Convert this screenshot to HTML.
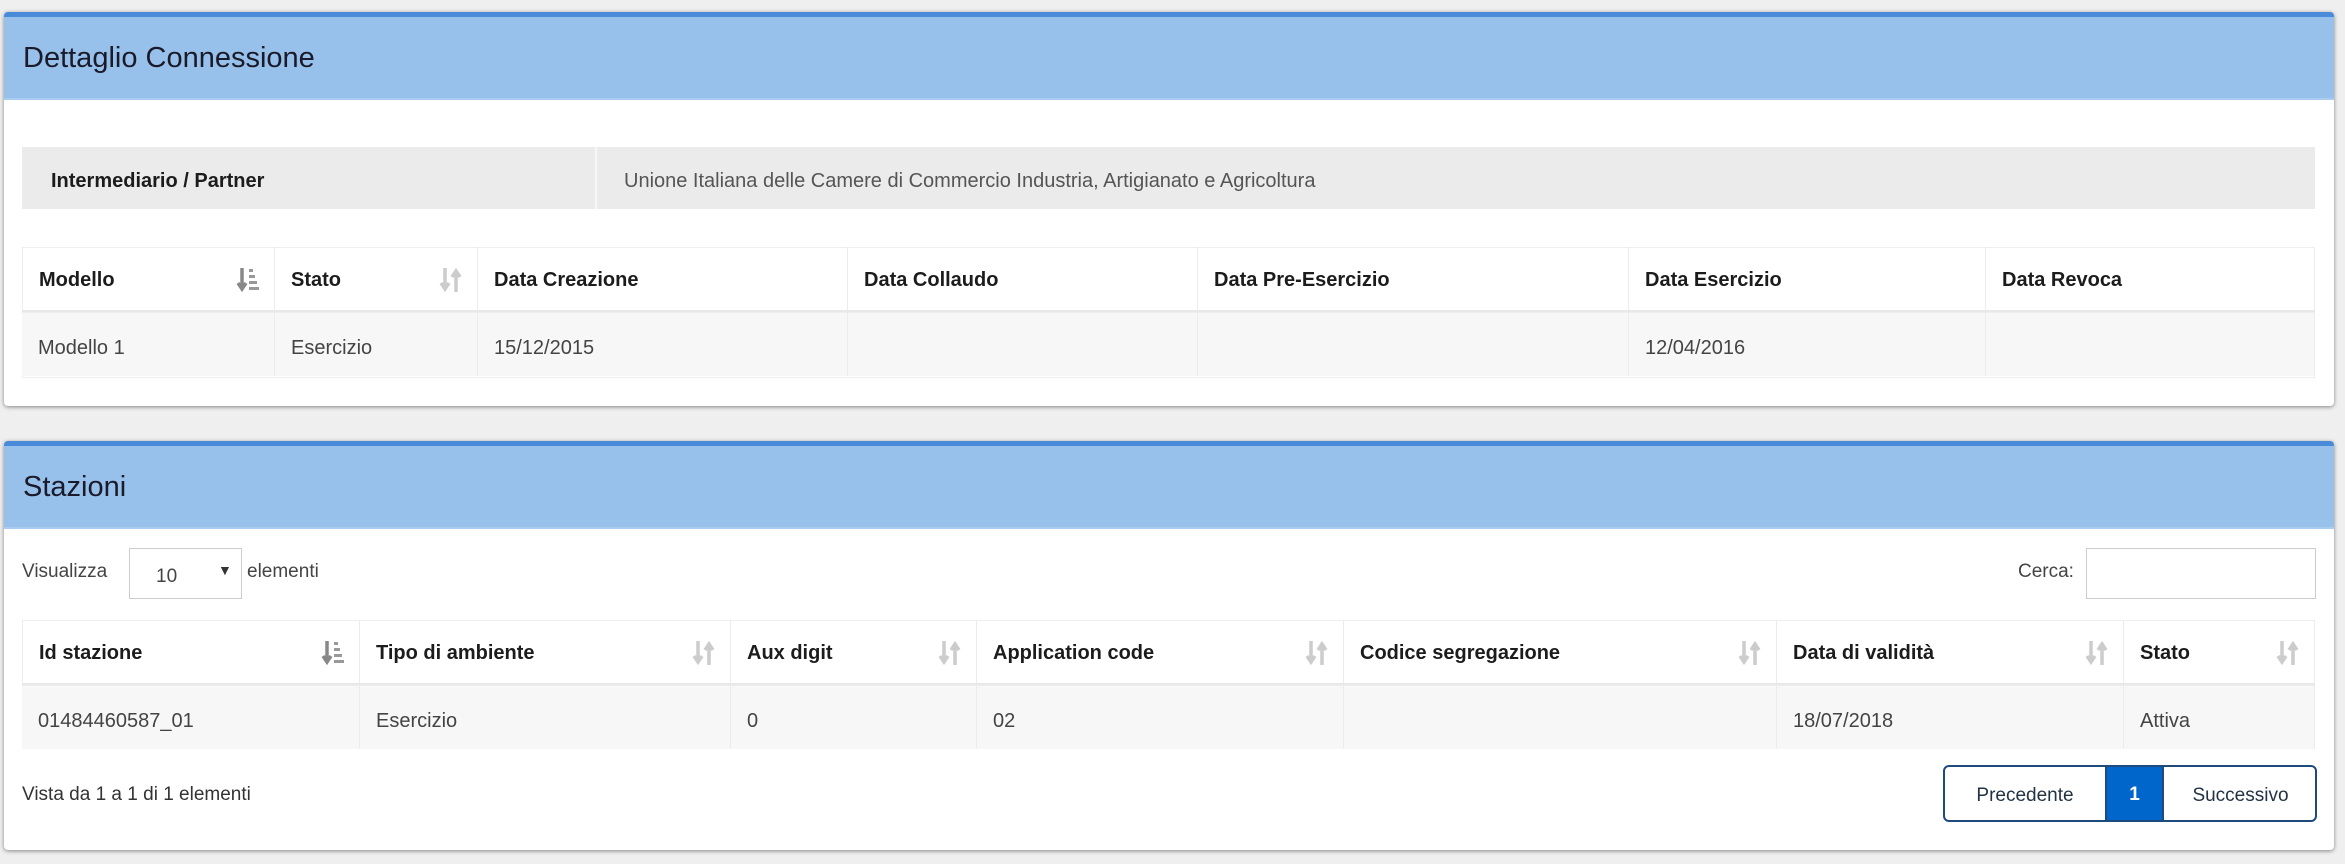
<!DOCTYPE html>
<html><head><meta charset="utf-8"><style>
*{margin:0;padding:0;box-sizing:border-box}
body{width:2345px;height:864px;background:#efefef;font-family:"Liberation Sans",sans-serif;position:relative;overflow:hidden;color:#333}
.a{position:absolute}
.panel{position:absolute;left:4px;width:2330px;background:#fff;border-radius:4px;box-shadow:0 1px 4px rgba(0,0,0,.45);overflow:hidden}
.hd{position:absolute;left:0;top:0;width:100%;background:#97c1ea;border-top:5px solid #4a8bd9;border-bottom:2px solid #a9cdf0}
.ttl{position:absolute;left:19px;font-size:29px;color:#1a1a2a}
.cell{position:absolute;font-size:20px;display:flex;align-items:center;padding-left:16px;border-right:1px solid #ececec}
.th{font-weight:bold;color:#1c1c1c;background:#fff;padding-top:2px}
.td{color:#444;background:#f7f7f7;padding-top:8px}
.ic{position:absolute;top:18px;width:24px;height:28px}
</style></head><body>

<div class="panel" style="top:12px;height:394px">
  <div class="hd" style="height:88px"></div>
  <div class="ttl" style="top:30px">Dettaglio Connessione</div>
  <div class="a" style="left:18px;top:135px;width:2293px;height:62px;background:#ebebeb"></div>
  <div class="a" style="left:591px;top:135px;width:2px;height:62px;background:#f7f7f7"></div>
  <div class="a" style="left:47px;top:158px;font-size:20px;font-weight:bold;color:#1c1c1c">Intermediario / Partner</div>
  <div class="a" style="left:620px;top:158px;font-size:20px;color:#555">Unione Italiana delle Camere di Commercio Industria, Artigianato e Agricoltura</div>

  <div class="a" style="left:18px;top:235px;width:2293px;height:131px;border:1px solid #eee;background:#fff"></div>
  <div class="a" style="left:18px;top:298px;width:2293px;height:2px;background:#eee"></div>
</div>

<div id="t1"></div>

<div class="panel" style="top:441px;height:409px">
  <div class="hd" style="height:88px"></div>
  <div class="ttl" style="top:30px">Stazioni</div>
</div>

<div class="a" style="left:22px;top:561px;font-size:19px;color:#444">Visualizza</div>
<div class="a" style="left:129px;top:548px;width:113px;height:51px;border:1px solid #ccc;background:#fff;font-size:19px;color:#444"><span class="a" style="left:26px;top:17px">10</span><span class="a" style="left:88px;top:13px;font-size:14px;color:#333">▼</span></div>
<div class="a" style="left:247px;top:561px;font-size:19px;color:#444">elementi</div>
<div class="a" style="left:2018px;top:561px;font-size:19px;color:#444">Cerca:</div>
<div class="a" style="left:2086px;top:548px;width:230px;height:51px;border:1px solid #ccc;background:#fff"></div>

<div class="a" style="left:22px;top:795px;font-size:19px;color:#333;transform:translateY(-50%)">Vista da 1 a 1 di 1 elementi</div>
<div class="a" style="left:1943px;top:765px;width:374px;height:57px;border:2px solid #1f4a7c;border-radius:6px;overflow:hidden;background:#fff;font-size:19px">
  <div class="a" style="left:0;top:2px;width:160px;height:53px;display:flex;align-items:center;justify-content:center;color:#234">Precedente</div>
  <div class="a" style="left:160px;top:0;width:59px;height:53px;background:#0066cc;border-left:2px solid #1f4a7c;border-right:2px solid #1f4a7c;display:flex;align-items:center;justify-content:center;color:#fff;font-weight:bold;padding-top:3px">1</div>
  <div class="a" style="left:219px;top:2px;width:153px;height:53px;display:flex;align-items:center;justify-content:center;color:#234">Successivo</div>
</div>

<svg width="0" height="0" style="position:absolute">
 <defs>
  <g id="both"><path d="M6 2v20M2 17l4 6 4-6" stroke="#ccc" stroke-width="3.5" fill="none"/><path d="M17 26V6M13 11l4-6 4 6" stroke="#ccc" stroke-width="3.5" fill="none"/></g>
  <g id="asc"><path d="M6 2v20M2 17l4 6 4-6" stroke="#888" stroke-width="3.5" fill="none"/><rect x="13" y="3" width="4" height="3" fill="#999"/><rect x="13" y="9" width="6" height="3" fill="#999"/><rect x="13" y="15" width="8" height="3" fill="#999"/><rect x="13" y="21" width="10" height="3" fill="#999"/></g>
 </defs>
</svg>

<script>
function tbl(top,cols,heads,vals,icons){
 let h='';const hh=63,rh=64;
 for(let i=0;i<cols.length-1;i++){
  const l=cols[i],w=cols[i+1]-cols[i];
  h+=`<div class="cell th" style="left:${l}px;top:${top}px;width:${w}px;height:${hh}px;border-top:1px solid #eee;${i==0?'border-left:1px solid #eee;':''}">${heads[i]}`;
  if(icons[i])h+=`<svg class="ic" style="right:14px" viewBox="0 0 24 28"><use href="#${icons[i]}"/></svg>`;
  h+=`</div>`;
  h+=`<div class="cell td" style="left:${l}px;top:${top+hh+2}px;width:${w}px;height:${rh}px;border-top:1px solid #eee;">${vals[i]}</div>`;
 }
 h+=`<div class="a" style="left:${cols[0]}px;top:${top+hh}px;width:${cols[cols.length-1]-cols[0]}px;height:2px;background:#e8e8e8"></div>`;
 return h;
}
document.getElementById('t1').outerHTML=
 tbl(247,[22,275,478,848,1198,1629,1986,2315],
 ['Modello','Stato','Data Creazione','Data Collaudo','Data Pre-Esercizio','Data Esercizio','Data Revoca'],
 ['Modello 1','Esercizio','15/12/2015','','','12/04/2016',''],
 ['asc','both',0,0,0,0,0]);
document.body.insertAdjacentHTML('beforeend',
 tbl(620,[22,360,731,977,1344,1777,2124,2315],
 ['Id stazione','Tipo di ambiente','Aux digit','Application code','Codice segregazione','Data di validità','Stato'],
 ['01484460587_01','Esercizio','0','02','','18/07/2018','Attiva'],
 ['asc','both','both','both','both','both','both']));
</script>
</body></html>
